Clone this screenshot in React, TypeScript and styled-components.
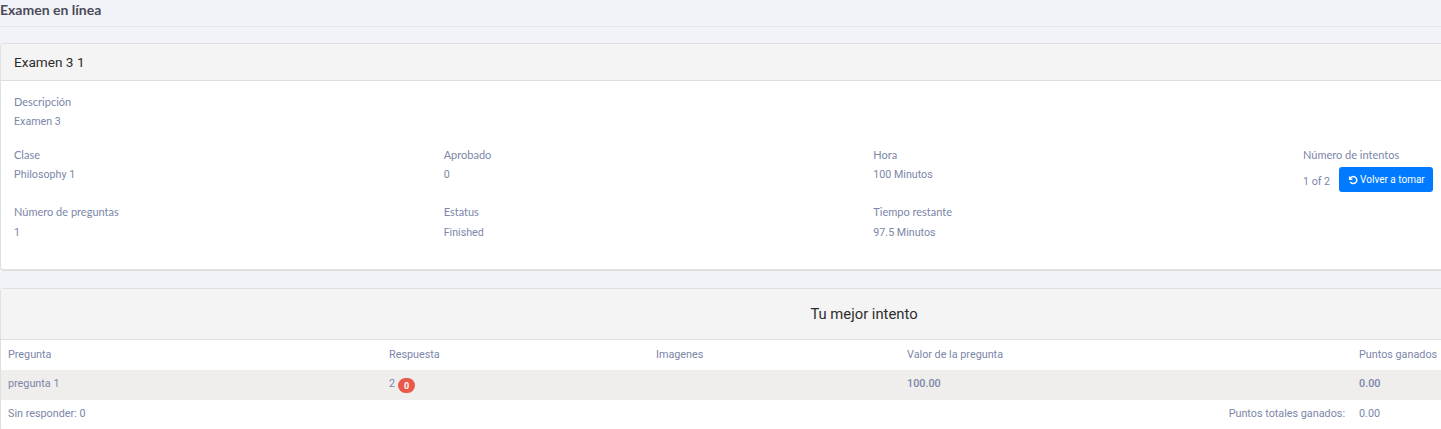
import React from 'react';
import styled, { createGlobalStyle } from 'styled-components';

const GlobalStyle = createGlobalStyle`
    html, body {
        margin: 0;
        height: 429px;
        overflow: hidden;
        background: #f2f3f8;
    }
    body {
        font-family: 'Roboto', 'Liberation Sans', sans-serif;
        color: #7b86a8;
    }
`;

const details = [
    [
        { label: 'Clase', value: 'Philosophy 1' },
        { label: 'Aprobado', value: '0' },
        { label: 'Hora', value: '100 Minutos' },
    ],
    [
        { label: 'Número de preguntas', value: '1' },
        { label: 'Estatus', value: 'Finished' },
        { label: 'Tiempo restante', value: '97.5 Minutos' },
    ],
];

const App = () => (
    <Page>
        <GlobalStyle />
        <TopBar>Examen en línea</TopBar>
        <Card>
            <CardHeader>Examen 3 1</CardHeader>
            <CardBody>
                <Description>
                    <Label>Descripción</Label>
                    <Value>Examen 3</Value>
                </Description>
                <DetailGrid>
                    {details[0].map((item) => (
                        <div key={item.label}>
                            <Label>{item.label}</Label>
                            <Value>{item.value}</Value>
                        </div>
                    ))}
                    <div>
                        <Label>Número de intentos</Label>
                        <Attempts>
                            <Value>1 of 2</Value>
                            <RetakeButton>
                                <RetakeIcon viewBox="0 0 24 24">
                                    <path d="M4 3.5v6.5h6.5" />
                                    <path d="M4.6 10a8.4 8.4 0 1 1 .9 6.5" />
                                </RetakeIcon>
                                Volver a tomar
                            </RetakeButton>
                        </Attempts>
                    </div>
                    {details[1].map((item) => (
                        <div key={item.label}>
                            <Label>{item.label}</Label>
                            <LastValue>{item.value}</LastValue>
                        </div>
                    ))}
                </DetailGrid>
            </CardBody>
        </Card>
        <ResultCard>
            <ResultHeader>Tu mejor intento</ResultHeader>
            <TableHead>
                <span>Pregunta</span>
                <span>Respuesta</span>
                <span>Imagenes</span>
                <span>Valor de la pregunta</span>
                <span>Puntos ganados</span>
            </TableHead>
            <TableRow $shaded>
                <span>pregunta 1</span>
                <AnswerCell>
                    2<Badge>0</Badge>
                </AnswerCell>
                <span />
                <strong>100.00</strong>
                <strong>0.00</strong>
            </TableRow>
            <TableRow>
                <span>Sin responder: 0</span>
                <TotalLabel>Puntos totales ganados:</TotalLabel>
                <span>0.00</span>
            </TableRow>
        </ResultCard>
    </Page>
);

const Page = styled.div`
    width: 1441px;
    height: 429px;
    overflow: hidden;
`;

const TopBar = styled.div`
    height: 26px;
    border-bottom: 1px solid #e6e7ec;
    font-family: 'Lato', sans-serif;
    font-size: 14px;
    font-weight: 700;
    line-height: 20px;
    color: #4b4b5a;
`;

const Card = styled.section`
    width: 1726px;
    margin-top: 16px;
    background: #fff;
    border: 1px solid #e0e0e0;
    border-bottom-width: 2px;
    border-radius: 4px;
`;

const ResultCard = styled(Card)`
    margin-top: 17px;
`;

const CardHeader = styled.div`
    height: 36px;
    padding-left: 13px;
    background: #f4f4f4;
    border-bottom: 1px solid #dfdfdf;
    font-size: 13.6px;
    line-height: 36px;
    color: #2d2d2d;
`;

const CardBody = styled.div`
    box-sizing: border-box;
    height: 188px;
    padding: 13px 0 0 13px;
`;

const Description = styled.div`
    margin-bottom: 16px;
`;

const DetailGrid = styled.div`
    display: grid;
    grid-template-columns: repeat(3, 429.67px) 1fr;
    row-gap: 12px;
`;

const Label = styled.div`
    font-family: 'Lato', sans-serif;
    font-size: 11px;
    line-height: 16px;
    margin-bottom: 2px;
`;

const Value = styled.div`
    font-size: 10.7px;
    line-height: 19px;
`;

const LastValue = styled(Value)`
    margin-top: 3px;
`;

const Attempts = styled.div`
    display: flex;
    align-items: center;
    gap: 9px;
    margin-top: 4px;

    ${Value} {
        margin-top: 3px;
    }
`;

const RetakeButton = styled.button`
    display: flex;
    align-items: center;
    gap: 2px;
    width: 94px;
    height: 25px;
    padding: 0 0 0 9px;
    border: none;
    border-radius: 3px;
    background: #007bff;
    color: #fff;
    font-family: 'Roboto', sans-serif;
    font-size: 10px;
    white-space: nowrap;
`;

const RetakeIcon = styled.svg`
    width: 10px;
    height: 10px;
    fill: none;
    stroke: #fff;
    stroke-width: 3.6;
`;

const ResultHeader = styled.div`
    height: 50px;
    background: #f4f4f4;
    border-bottom: 1px solid #dfdfdf;
    text-align: center;
    font-size: 14.8px;
    line-height: 51px;
    color: #2d2d2d;
`;

const TableRow = styled.div<{ $shaded?: boolean }>`
    display: grid;
    grid-template-columns: 381px 267px 251px 452px 1fr;
    box-sizing: border-box;
    height: 30px;
    align-items: center;
    padding: 0 0 3px 7px;
    background: ${({ $shaded }) => ($shaded ? '#f0eded' : 'transparent')};
    font-size: 10.8px;

    strong {
        font-weight: 500;
    }
`;

const TableHead = styled(TableRow)`
    padding-bottom: 1px;
`;

const AnswerCell = styled.span`
    display: flex;
    align-items: center;
    gap: 3px;
`;

const Badge = styled.span`
    width: 17px;
    height: 15px;
    margin: 2px 0 -2px;
    border-radius: 8px;
    background: #e8594a;
    color: #fff;
    font-size: 9px;
    font-weight: 700;
    line-height: 16px;
    text-align: center;
`;

const TotalLabel = styled.span`
    grid-column: 2 / 5;
    padding-right: 14px;
    text-align: right;
`;

export default App;
